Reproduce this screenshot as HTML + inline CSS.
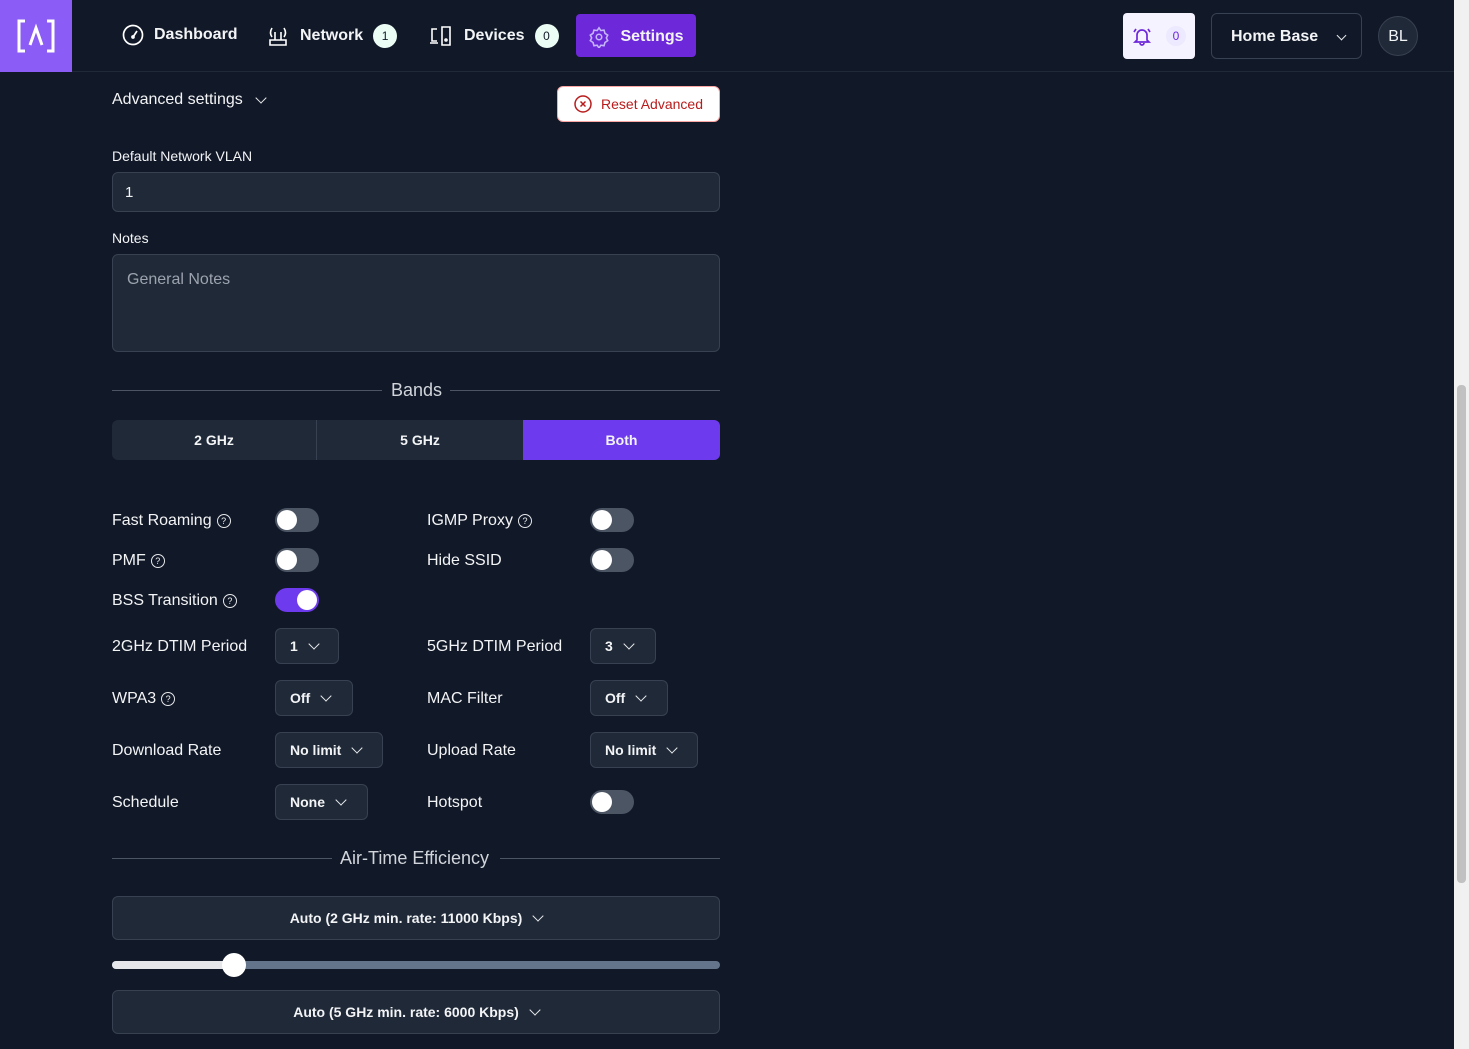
<!DOCTYPE html>
<html><head><meta charset="utf-8"><style>
*{box-sizing:border-box;margin:0;padding:0}
body{width:1469px;height:1049px;background:#111827;color:#f3f4f6;font-family:"Liberation Sans",sans-serif;position:relative;overflow:hidden}
.a{position:absolute}
.nav{left:0;top:0;width:1454px;height:72px;border-bottom:1px solid #1f2937}
.logo{left:0;top:0;width:72px;height:72px;background:#8b5cf6;display:flex;align-items:center;justify-content:center}
.ni{top:24px;font-size:16px;font-weight:bold;display:flex;align-items:center;gap:10px;color:#f3f4f6}
.badge{width:24px;height:24px;border-radius:12px;background:#ecfdf5;color:#111827;font-size:12px;font-weight:normal;display:flex;align-items:center;justify-content:center}
.lbl{font-size:14px;color:#f3f4f6}
.inp{background:#1f2937;border:1px solid #374151;border-radius:6px}
.tg{width:44px;height:24px;border-radius:12px;background:#4b5563}
.tg::after{content:"";position:absolute;top:2px;left:2px;width:20px;height:20px;border-radius:10px;background:#fff}
.tg.on{background:#6d3aed}.tg.on::after{left:22px}
.rl{font-size:16px;color:#f3f4f6;display:flex;align-items:center;gap:5px}
.q{width:14px;height:14px;border:1.3px solid #e5e7eb;border-radius:50%;font-size:9px;display:inline-flex;align-items:center;justify-content:center}
.sel{height:36px;background:#1f2937;border:1px solid #374151;border-radius:6px;font-size:14px;font-weight:bold;display:flex;align-items:center;padding-left:14px;gap:12px}
.chev{width:8px;height:8px;border-right:1.6px solid #e5e7eb;border-bottom:1.6px solid #e5e7eb;transform:rotate(45deg);margin-top:-4px}
.hr{height:1px;background:#4b5563}
</style></head><body>
<div class="a nav"></div>
<div class="a logo"><svg width="38" height="34" viewBox="0 0 38 34" fill="none" stroke="#fff" stroke-width="3"><path d="M8 2H2V32H8M30 2H36V32H30M13 26L19 9L25 26"/></svg></div>
<div class="a ni" style="left:122px"><svg width="22" height="22" viewBox="0 0 22 22" fill="none" stroke="#fff" stroke-width="1.7"><circle cx="11" cy="11" r="9.5"/><path d="M11 13L15 7"/><circle cx="11" cy="13" r="1"/></svg>Dashboard</div>
<div class="a ni" style="left:266px"><svg width="24" height="24" viewBox="0 0 24 24" fill="none" stroke="#fff" stroke-width="1.6"><path d="M4 16H20V21H4Z M9 16V8M15 16V8M6 4Q3 9 6 13M18 4Q21 9 18 13"/></svg>Network<span class="badge">1</span></div>
<div class="a ni" style="left:430px"><svg width="24" height="22" viewBox="0 0 24 22" fill="none" stroke="#fff" stroke-width="1.6"><path d="M7 4H2V16H7M12 2H20V20H12ZM0 18H8"/><circle cx="16" cy="15" r="1"/></svg>Devices<span class="badge">0</span></div>
<div class="a" style="left:576px;top:14px;width:120px;height:43px;background:#6d28d9;border-radius:4px;display:flex;align-items:center;justify-content:center;gap:10px;font-size:16px;font-weight:bold;padding-top:2px"><svg width="22" height="22" viewBox="0 0 24 24" fill="none" stroke="#c4b5fd" stroke-width="1.7"><circle cx="12" cy="12" r="3"/><path d="M12 2l2 3 3.5-.5 1 3.5 3 2-1.5 3 1.5 3-3 2-1 3.5-3.5-.5-2 3-2-3-3.5.5-1-3.5-3-2 1.5-3-1.5-3 3-2 1-3.5 3.5.5z"/></svg>Settings</div>
<div class="a" style="left:1123px;top:13px;width:72px;height:46px;background:#f5f3ff;border-radius:4px;display:flex;align-items:center;justify-content:center;gap:14px"><svg width="20" height="20" viewBox="0 0 20 20" fill="none" stroke="#6d28d9" stroke-width="1.7"><path d="M5 14V9a5 5 0 0 1 10 0v5l2 2H3zM8 17a2 2 0 0 0 4 0M2 6l2-3M18 6l-2-3"/></svg><span style="width:20px;height:20px;border-radius:10px;background:#ede9fe;color:#6d28d9;font-size:12px;display:flex;align-items:center;justify-content:center">0</span></div>
<div class="a" style="left:1211px;top:13px;width:151px;height:46px;border:1px solid #374151;border-radius:6px;display:flex;align-items:center;padding-left:19px;gap:20px;font-size:16px;font-weight:bold;padding-top:2px">Home Base<span class="chev" style="width:7px;height:7px"></span></div>
<div class="a" style="left:1378px;top:16px;width:40px;height:40px;border-radius:20px;background:#1f2937;border:1px solid #374151;display:flex;align-items:center;justify-content:center;font-size:16px;padding-top:2px">BL</div>
<div class="a" style="left:1454px;top:0;width:15px;height:1049px;background:#f1f1f1"></div>
<div class="a" style="left:1457px;top:385px;width:9px;height:498px;background:#c1c1c1;border-radius:4px"></div>

<div class="a" style="left:112px;top:91px;font-size:16px;display:flex;align-items:center;gap:14px">Advanced settings<span class="chev"></span></div>
<div class="a" style="left:557px;top:86px;width:163px;height:36px;background:#fff;border:1px solid #fca5a5;border-radius:6px;display:flex;align-items:center;justify-content:center;gap:9px;color:#b91c1c;font-size:14px"><svg width="18" height="18" viewBox="0 0 18 18" fill="none" stroke="#b91c1c" stroke-width="1.5"><circle cx="9" cy="9" r="8"/><path d="M6.5 6.5l5 5M11.5 6.5l-5 5"/></svg>Reset Advanced</div>

<div class="a lbl" style="left:112px;top:148px">Default Network VLAN</div>
<div class="a inp" style="left:112px;top:172px;width:608px;height:40px;padding:11px 12px;font-size:15px">1</div>
<div class="a lbl" style="left:112px;top:230px">Notes</div>
<div class="a inp" style="left:112px;top:254px;width:608px;height:98px;padding:16px 14px;font-size:16px;color:#9ca3af">General Notes</div>

<div class="a hr" style="left:112px;top:390px;width:270px"></div>
<div class="a" style="left:391px;top:380px;font-size:18px;color:#d1d5db">Bands</div>
<div class="a hr" style="left:450px;top:390px;width:270px"></div>
<div class="a" style="left:112px;top:420px;width:608px;height:40px;background:#1f2937;border-radius:6px;overflow:hidden;display:flex;font-size:14px;font-weight:bold">
<div style="width:205px;display:flex;align-items:center;justify-content:center;border-right:1px solid #374151">2 GHz</div>
<div style="width:206px;display:flex;align-items:center;justify-content:center">5 GHz</div>
<div style="flex:1;display:flex;align-items:center;justify-content:center;background:#6d3aed">Both</div></div>

<div class="a rl" style="left:112px;top:512px">Fast Roaming <span class="q">?</span></div><div class="a tg" style="left:275px;top:508px"></div>
<div class="a rl" style="left:427px;top:512px">IGMP Proxy <span class="q">?</span></div><div class="a tg" style="left:590px;top:508px"></div>
<div class="a rl" style="left:112px;top:552px">PMF <span class="q">?</span></div><div class="a tg" style="left:275px;top:548px"></div>
<div class="a rl" style="left:427px;top:552px">Hide SSID</div><div class="a tg" style="left:590px;top:548px"></div>
<div class="a rl" style="left:112px;top:592px">BSS Transition <span class="q">?</span></div><div class="a tg on" style="left:275px;top:588px"></div>

<div class="a rl" style="left:112px;top:638px">2GHz DTIM Period</div><div class="a sel" style="left:275px;top:628px;width:64px">1<span class="chev"></span></div>
<div class="a rl" style="left:427px;top:638px">5GHz DTIM Period</div><div class="a sel" style="left:590px;top:628px;width:66px">3<span class="chev"></span></div>
<div class="a rl" style="left:112px;top:690px">WPA3 <span class="q">?</span></div><div class="a sel" style="left:275px;top:680px;width:78px">Off<span class="chev"></span></div>
<div class="a rl" style="left:427px;top:690px">MAC Filter</div><div class="a sel" style="left:590px;top:680px;width:78px">Off<span class="chev"></span></div>
<div class="a rl" style="left:112px;top:742px">Download Rate</div><div class="a sel" style="left:275px;top:732px;width:108px">No limit<span class="chev"></span></div>
<div class="a rl" style="left:427px;top:742px">Upload Rate</div><div class="a sel" style="left:590px;top:732px;width:108px">No limit<span class="chev"></span></div>
<div class="a rl" style="left:112px;top:794px">Schedule</div><div class="a sel" style="left:275px;top:784px;width:93px">None<span class="chev"></span></div>
<div class="a rl" style="left:427px;top:794px">Hotspot</div><div class="a tg" style="left:590px;top:790px"></div>

<div class="a hr" style="left:112px;top:858px;width:220px"></div>
<div class="a" style="left:340px;top:848px;font-size:18px;color:#d1d5db">Air-Time Efficiency</div>
<div class="a hr" style="left:500px;top:858px;width:220px"></div>
<div class="a sel" style="left:112px;top:896px;width:608px;height:44px;justify-content:center;padding:0">Auto (2 GHz min. rate: 11000 Kbps)<span class="chev"></span></div>
<div class="a" style="left:112px;top:961px;width:608px;height:8px;border-radius:4px;background:#64748b"></div>
<div class="a" style="left:112px;top:961px;width:122px;height:8px;border-radius:4px;background:#e5e7eb"></div>
<div class="a" style="left:222px;top:953px;width:24px;height:24px;border-radius:12px;background:#fff"></div>
<div class="a sel" style="left:112px;top:990px;width:608px;height:44px;justify-content:center;padding:0">Auto (5 GHz min. rate: 6000 Kbps)<span class="chev"></span></div>
</body></html>
